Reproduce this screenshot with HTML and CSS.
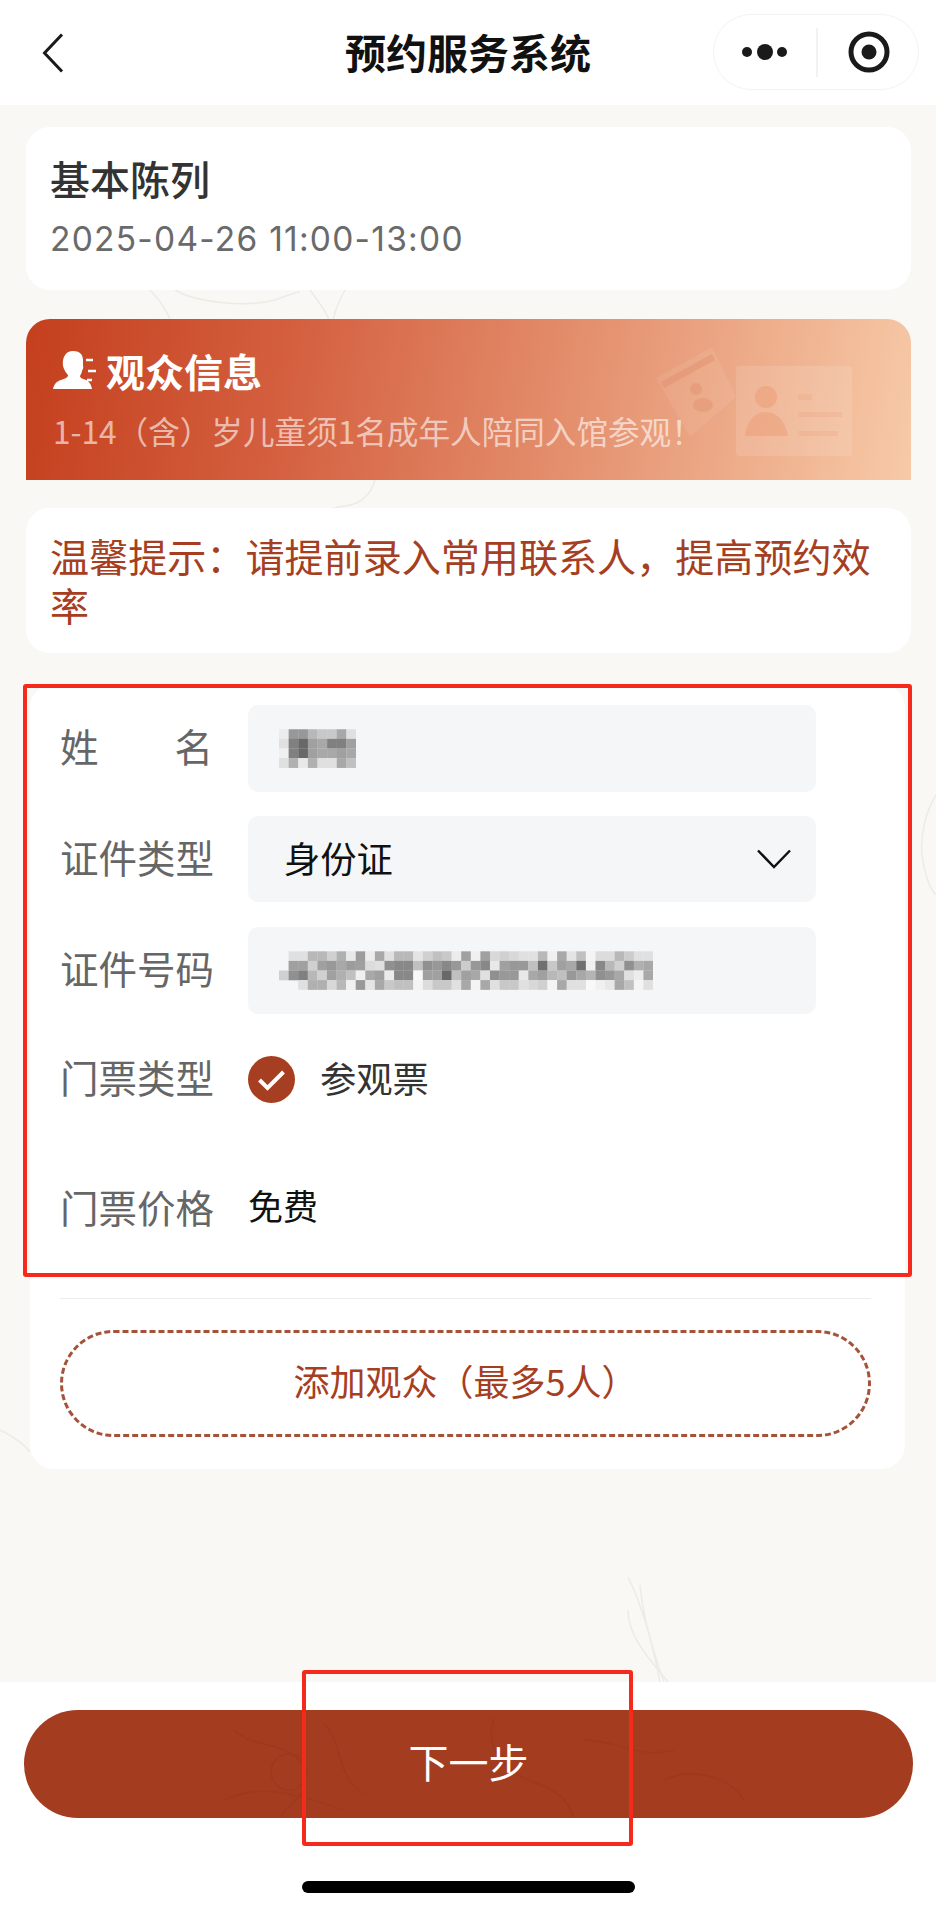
FILE: index.html
```html
<!DOCTYPE html>
<html lang="zh-CN">
<head>
<meta charset="utf-8">
<title>预约服务系统</title>
<link rel="stylesheet" href="styles.css">
</head>
<body>
<div class="page">
  <header class="nav">
    <div class="nav-left">
      <svg class="back" viewBox="0 0 22 40" width="22" height="40"><path d="M20 1.5 2.5 20 20 38.5" fill="none" stroke="#1a1a1a" stroke-width="3"/></svg>
    </div>
    <h1 class="nav-title">预约服务系统</h1>
    <div class="nav-right">
      <div class="capsule">
        <svg class="capsule-icon" viewBox="0 0 206 76" width="206" height="76">
          <circle cx="34" cy="38" r="5" fill="#1a1a1a"/><circle cx="52" cy="38" r="8" fill="#1a1a1a"/><circle cx="69" cy="38" r="5" fill="#1a1a1a"/>
          <line x1="104" y1="14" x2="104" y2="63" stroke="#e6e6e6" stroke-width="1"/>
          <circle cx="156" cy="38" r="18" fill="none" stroke="#1a1a1a" stroke-width="5"/><circle cx="156" cy="38" r="7.5" fill="#1a1a1a"/>
        </svg>
      </div>
    </div>
  </header>

  <main class="main">
    <svg class="ink" viewBox="0 0 936 1577" width="936" height="1577">
      <g fill="none" stroke="#ecebe6" stroke-width="1.5">
        <path d="M175 185c20 12 70 18 100 10 12-4 20-8 25-8"/>
        <path d="M150 185c14 14 20 26 24 40"/>
        <path d="M310 185c10 14 20 26 22 40M345 185c-8 14-12 26-14 40"/>
        <path d="M375 375c-4 14-14 24-30 26-14 2-28 4-40 26"/>
        <path d="M936 690c-10 16-16 40-14 60 2 18 8 34 14 40"/>
        <path d="M0 1325c12 6 24 14 30 22"/>
        <path d="M628 1472c12 24 24 64 32 105M628 1505c0 28 24 52 40 72M640 1480c2 24 8 52 24 97"/>
      </g>
    </svg>

    <section class="card session">
      <h2 class="session-title">基本陈列</h2>
      <p class="session-time">2025-04-26 11:00-13:00</p>
    </section>

    <section class="banner">
      <svg class="banner-art" viewBox="0 0 210 120" width="210" height="120">
        <path d="M10 42 66 11l24 50-46 40z" fill="#fff" opacity=".08"/>
        <path d="M15 46 66 18l3 6-51 28z" fill="#d9805c" opacity=".3"/>
        <circle cx="50" cy="53" r="6" fill="#e08a64" opacity=".35"/>
        <ellipse cx="57" cy="69" rx="10" ry="7" fill="#e08a64" opacity=".35"/>
        <rect x="90" y="30" width="116" height="90" rx="3" fill="#fff" opacity=".12"/>
        <circle cx="120" cy="61" r="11" fill="#ec9c74" opacity=".5"/>
        <path d="M99 100c2-16 11-24 21-24s19 8 22 24z" fill="#ec9c74" opacity=".5"/>
        <rect x="152" y="58" width="14" height="6" fill="#ec9c74" opacity=".2"/>
        <rect x="152" y="76" width="44" height="5" fill="#ec9c74" opacity=".2"/>
        <rect x="152" y="95" width="40" height="5" fill="#ec9c74" opacity=".2"/>
      </svg>
      <div class="banner-head">
        <svg class="banner-icon" viewBox="0 0 44 38" width="44" height="38">
          <path d="M20 0c6 0 10 3 10 9v5c0 1 .4 2 .2 3-.3 1.500-1 2-1.200 3-.3 2-1.500 4-2 5 0 2 3 3 6 4 3 1.500 5 4 6 9H0c1-5 4-8 8-9 4-1.500 7-2 7-5-2-2-4-5-5-9-1-9 3-15 10-15z" fill="#fff"/>
          <path d="M33 9h7M35 20h8M34 29h5" fill="none" stroke="#fff" stroke-width="2.500"/>
        </svg>
        <h2 class="banner-title">观众信息</h2>
      </div>
      <p class="banner-sub">1-14（含）岁儿童须1名成年人陪同入馆参观！</p>
    </section>

    <section class="card tip">温馨提示：请提前录入常用联系人，提高预约效率</section>

    <section class="card form">
      <div class="row">
        <span class="label label-spread"><span>姓</span><span>名</span></span>
        <div class="field">
          <svg class="mosaic mosaic-name" viewBox="0 0 8 4" width="77" height="39">
            <g><rect x="0" fill="#ececec"/><rect x="1" fill="#989898"/><rect x="2" fill="#989898"/><rect x="3" fill="#b8b8b8"/><rect x="4" fill="#c8c8c8"/><rect x="5" fill="#c8c8c8"/><rect x="6" fill="#a8a8a8"/><rect x="7" fill="#e0e0e0"/></g>
            <g transform="translate(0 1)"><rect x="0" fill="#e0e0e0"/><rect x="1" fill="#808080"/><rect x="2" fill="#686868"/><rect x="3" fill="#a0a0a0"/><rect x="4" fill="#a8a8a8"/><rect x="5" fill="#808080"/><rect x="6" fill="#808080"/><rect x="7" fill="#a0a0a0"/></g>
            <g transform="translate(0 2)"><rect x="0" fill="#f0f0f0"/><rect x="1" fill="#808080"/><rect x="2" fill="#686868"/><rect x="3" fill="#a0a0a0"/><rect x="4" fill="#a8a8a8"/><rect x="5" fill="#a8a8a8"/><rect x="6" fill="#a0a0a0"/><rect x="7" fill="#a8a8a8"/></g>
            <g transform="translate(0 3)"><rect x="0" fill="#e0e0e0"/><rect x="1" fill="#b0b0b0"/><rect x="2" fill="#e8e8e8"/><rect x="3" fill="#b0b0b0"/><rect x="4" fill="#e0e0e0"/><rect x="5" fill="#e0e0e0"/><rect x="6" fill="#a8a8a8"/><rect x="7" fill="#c0c0c0"/></g>
          </svg>
        </div>
      </div>
      <div class="row">
        <span class="label">证件类型</span>
        <div class="field field-select">
          <span class="field-value">身份证</span>
          <svg class="chevron" viewBox="0 0 34 20" width="34" height="20"><path d="M1 1.500 17 18 33 1.500" fill="none" stroke="#111" stroke-width="2.500"/></svg>
        </div>
      </div>
      <div class="row">
        <span class="label">证件号码</span>
        <div class="field">
          <svg class="mosaic mosaic-id" viewBox="0 0 39 4" width="374" height="39">
            <g><rect x="1" fill="#e0e0e0"/><rect x="2" fill="#e0e0e0"/><rect x="3" fill="#b8b8b8"/><rect x="4" fill="#b8b8b8"/><rect x="5" fill="#d0d0d0"/><rect x="6" fill="#b0b0b0"/><rect x="7" fill="#e8e8e8"/><rect x="8" fill="#9c9c9c"/><rect x="9" fill="#ececec"/><rect x="10" fill="#a8a8a8"/><rect x="11" fill="#e0e0e0"/><rect x="12" fill="#b8b8b8"/><rect x="13" fill="#b8b8b8"/><rect x="14" fill="#e4e4e4"/><rect x="15" fill="#d0d0d0"/><rect x="16" fill="#c0c0c0"/><rect x="17" fill="#c8c8c8"/><rect x="18" fill="#ececec"/><rect x="19" fill="#a0a0a0"/><rect x="20" fill="#f0f0f0"/><rect x="21" fill="#a0a0a0"/><rect x="22" fill="#d8d8d8"/><rect x="23" fill="#d0d0d0"/><rect x="24" fill="#d8d8d8"/><rect x="25" fill="#e0e0e0"/><rect x="26" fill="#e0e0e0"/><rect x="27" fill="#b8b8b8"/><rect x="28" fill="#f0f0f0"/><rect x="29" fill="#a8a8a8"/><rect x="30" fill="#e4e4e4"/><rect x="31" fill="#c0c0c0"/><rect x="32" fill="#f4f4f4"/><rect x="33" fill="#dcdcdc"/><rect x="34" fill="#dcdcdc"/><rect x="35" fill="#b8b8b8"/><rect x="36" fill="#cccccc"/><rect x="37" fill="#e0e0e0"/><rect x="38" fill="#e0e0e0"/></g>
            <g transform="translate(0 1)"><rect x="1" fill="#a0a0a0"/><rect x="2" fill="#a0a0a0"/><rect x="3" fill="#d0d0d0"/><rect x="4" fill="#a0a0a0"/><rect x="5" fill="#989898"/><rect x="6" fill="#a8a8a8"/><rect x="7" fill="#9c9c9c"/><rect x="8" fill="#a0a0a0"/><rect x="9" fill="#dcdcdc"/><rect x="10" fill="#e0e0e0"/><rect x="11" fill="#909090"/><rect x="12" fill="#888888"/><rect x="13" fill="#888888"/><rect x="14" fill="#c0c0c0"/><rect x="15" fill="#909090"/><rect x="16" fill="#989898"/><rect x="17" fill="#888888"/><rect x="18" fill="#989898"/><rect x="19" fill="#cccccc"/><rect x="20" fill="#989898"/><rect x="21" fill="#888888"/><rect x="22" fill="#e8e8e8"/><rect x="23" fill="#a0a0a0"/><rect x="24" fill="#989898"/><rect x="25" fill="#989898"/><rect x="26" fill="#c0c0c0"/><rect x="27" fill="#707070"/><rect x="28" fill="#c8c8c8"/><rect x="29" fill="#a0a0a0"/><rect x="30" fill="#a8a8a8"/><rect x="31" fill="#707070"/><rect x="32" fill="#f0f0f0"/><rect x="33" fill="#888888"/><rect x="34" fill="#b8b8b8"/><rect x="35" fill="#d0d0d0"/><rect x="36" fill="#909090"/><rect x="37" fill="#b0b0b0"/><rect x="38" fill="#a8a8a8"/></g>
            <g transform="translate(0 2)"><rect x="0" fill="#d0d0d0"/><rect x="1" fill="#909090"/><rect x="2" fill="#808080"/><rect x="3" fill="#b8b8b8"/><rect x="4" fill="#d0d0d0"/><rect x="5" fill="#a0a0a0"/><rect x="6" fill="#b0b0b0"/><rect x="7" fill="#c0c0c0"/><rect x="8" fill="#f0f0f0"/><rect x="9" fill="#a8a8a8"/><rect x="10" fill="#a0a0a0"/><rect x="11" fill="#ececec"/><rect x="12" fill="#888888"/><rect x="13" fill="#888888"/><rect x="14" fill="#f8f8f8"/><rect x="15" fill="#a0a0a0"/><rect x="16" fill="#a0a0a0"/><rect x="17" fill="#686868"/><rect x="18" fill="#c0c0c0"/><rect x="19" fill="#a0a0a0"/><rect x="20" fill="#a8a8a8"/><rect x="21" fill="#e0e0e0"/><rect x="22" fill="#909090"/><rect x="23" fill="#989898"/><rect x="24" fill="#989898"/><rect x="25" fill="#e8e8e8"/><rect x="26" fill="#a8a8a8"/><rect x="27" fill="#a0a0a0"/><rect x="28" fill="#b8b8b8"/><rect x="29" fill="#c0c0c0"/><rect x="30" fill="#989898"/><rect x="31" fill="#a8a8a8"/><rect x="32" fill="#b4b4b4"/><rect x="33" fill="#909090"/><rect x="34" fill="#989898"/><rect x="35" fill="#a8a8a8"/><rect x="36" fill="#e0e0e0"/><rect x="37" fill="#ececec"/><rect x="38" fill="#a8a8a8"/></g>
            <g transform="translate(0 3)"><rect x="2" fill="#e0e0e0"/><rect x="3" fill="#b0b0b0"/><rect x="4" fill="#b0b0b0"/><rect x="5" fill="#d8d8d8"/><rect x="6" fill="#b8b8b8"/><rect x="7" fill="#f0f0f0"/><rect x="8" fill="#989898"/><rect x="9" fill="#e4e4e4"/><rect x="10" fill="#a8a8a8"/><rect x="11" fill="#c8c8c8"/><rect x="12" fill="#c0c0c0"/><rect x="13" fill="#c0c0c0"/><rect x="14" fill="#f4f4f4"/><rect x="15" fill="#dcdcdc"/><rect x="16" fill="#c8c8c8"/><rect x="17" fill="#c8c8c8"/><rect x="18" fill="#e0e0e0"/><rect x="19" fill="#a8a8a8"/><rect x="20" fill="#f4f4f4"/><rect x="21" fill="#a8a8a8"/><rect x="22" fill="#e0e0e0"/><rect x="23" fill="#c8c8c8"/><rect x="24" fill="#c8c8c8"/><rect x="25" fill="#e0e0e0"/><rect x="26" fill="#d8d8d8"/><rect x="27" fill="#d0d0d0"/><rect x="28" fill="#f4f4f4"/><rect x="29" fill="#a8a8a8"/><rect x="30" fill="#e0e0e0"/><rect x="31" fill="#e0e0e0"/><rect x="32" fill="#f8f8f8"/><rect x="33" fill="#f0f0f0"/><rect x="34" fill="#e8e8e8"/><rect x="35" fill="#a8a8a8"/><rect x="36" fill="#c0c0c0"/><rect x="37" fill="#f4f4f4"/><rect x="38" fill="#e0e0e0"/></g>
          </svg>
        </div>
      </div>
      <div class="row row-ticket">
        <span class="label">门票类型</span>
        <svg class="check" viewBox="0 0 47 47" width="47" height="47"><circle cx="23.500" cy="23.500" r="23.500" fill="#a63e22"/><path d="M11.500 24l8 8 16-16" fill="none" stroke="#fff" stroke-width="4"/></svg>
        <span class="ticket-name">参观票</span>
      </div>
      <div class="row row-price">
        <span class="label">门票价格</span>
        <span class="price">免费</span>
      </div>
      <div class="divider"></div>
      <button class="add" type="button">添加观众（最多5人）</button>
    </section>
  </main>

  <footer class="footer">
    <button class="next" type="button">
      <svg class="next-art" viewBox="0 0 888 108" width="888" height="108">
        <g fill="none" stroke="#8f3119" stroke-width="1.500" opacity=".25">
          <path d="M210 20c20 20 60 10 70 40s-30 40-20 48M300 14c20 20 10 50 40 70M200 90c40-20 90 0 120 10"/>
          <path d="M470 8c-10 30 10 50 30 60s40 10 50 40M560 30c30 0 60 20 90 10M640 70c20-10 60-10 80 20"/>
          <circle cx="265" cy="62" r="18"/>
        </g>
      </svg>
      <span class="next-text">下一步</span>
    </button>
    <div class="home-bar"></div>
  </footer>

  <div class="mark mark-form"></div>
  <div class="mark mark-next"></div>
</div>
</body>
</html>
```

FILE: styles.css
```css
* { box-sizing: border-box; }
html, body { margin: 0; padding: 0; }
body { font-family: "Noto Sans CJK SC", "Noto Sans", sans-serif; background: #f9f8f4; }
h1, h2, p { margin: 0; font-weight: inherit; }

.page { position: relative; width: 936px; height: 1912px; display: flex; flex-direction: column; overflow: hidden; background: #f9f8f4; }

/* Navigation bar */
.nav { flex: none; height: 105px; display: grid; grid-template-columns: 1fr auto 1fr; align-items: center; background: #fff; }
.nav-left { padding-left: 42px; display: flex; align-items: center; }
.back { display: block; }
.nav-title { font-size: 41px; line-height: 50px; font-weight: 700; color: #111; margin-top: -4px; }
.nav-right { display: flex; justify-content: flex-end; padding-right: 17px; }
.capsule { width: 206px; height: 76px; border: 1px solid #f3f3f3; border-radius: 38px; margin-top: -1px; }
.capsule-icon { display: block; margin: -1px; }

/* Main column */
.main { position: relative; flex: 1; padding: 22px 25px 0 26px; display: flex; flex-direction: column; }
.ink { position: absolute; left: 0; top: 0; filter: blur(.6px); }
.card { position: relative; background: #fff; border-radius: 24px; }

.session { height: 163px; padding: 26px 24px 0; }
.session-title { font-size: 40px; line-height: 50px; font-weight: 500; color: #333; }
.session-time { margin-top: 16px; font-family: Inter, "Noto Sans", sans-serif; font-size: 33.500px; line-height: 40px; color: #6a6a6a; letter-spacing: 1.250px; }

.banner { position: relative; margin-top: 29px; height: 161px; padding: 26px 27px 0; border-radius: 24px 24px 0 0; overflow: hidden; background: linear-gradient(100deg, #c43f1d 0%, #d46040 30%, #e4906e 62%, #f7caa8 100%); }
.banner-art { position: absolute; left: 620px; top: 17px; }
.banner-head { position: relative; display: flex; align-items: center; gap: 9px; height: 50px; }
.banner-icon { display: block; flex: none; }
.banner-title { font-size: 39px; line-height: 50px; font-weight: 700; color: #fff; }
.banner-sub { position: relative; margin-top: 15px; font-size: 31.600px; line-height: 40px; color: rgba(255, 255, 255, .62); white-space: nowrap; }

.tip { margin-top: 28px; height: 145px; padding: 23px 24px 0; font-size: 39.100px; line-height: 49px; color: #a63e22; }

/* Form */
.form { margin: 31px 6px 0 4px; height: 785px; padding: 21px 34px 0 30px; }
.row { display: flex; align-items: center; margin-bottom: 24px; }
.label { flex: none; width: 153px; margin-right: 35px; padding-bottom: 7px; font-size: 38.500px; line-height: 50px; color: #666; white-space: nowrap; }
.label-spread { display: flex; justify-content: space-between; }
.field { width: 568px; height: 87px; padding: 0 25px 0 31px; display: flex; align-items: center; background: #f4f6f8; border-radius: 10px; }
.field-select { justify-content: space-between; height: 86px; margin-bottom: 1px; padding-left: 36px; }
.field-value { padding-bottom: 5px; font-size: 36.300px; line-height: 50px; color: #111; }
.chevron { display: block; }
.mosaic { display: block; filter: blur(.7px); }
.mosaic rect { width: 1.020px; height: 1.020px; }

.row-ticket { height: 47px; margin: 42px 0 0; }
.check { display: block; flex: none; margin-right: 25px; }
.ticket-name { padding-bottom: 6px; font-size: 36.300px; line-height: 50px; color: #333; }
.row-price { height: 50px; margin: 81px 0 0; }
.price { padding-bottom: 8px; font-size: 35px; line-height: 50px; color: #111; }

.divider { margin-top: 64px; width: 811px; height: 1px; background: #ececec; }
.add { display: block; margin-top: 31px; width: 811px; height: 107px; padding: 0 0 7px; background: transparent; border: 3px dashed #a5523a; border-radius: 54px; font-family: inherit; font-size: 36px; line-height: 50px; color: #a63e22; }

/* Footer */
.footer { position: relative; flex: none; height: 230px; padding: 28px 23px 0 24px; background: #fff; }
.next { position: relative; display: block; width: 889px; height: 108px; padding: 0 0 6px; border: 0; border-radius: 54px; overflow: hidden; background: #a43c20; font-family: inherit; }
.next-art { position: absolute; left: 0; top: 0; }
.next-text { position: relative; font-size: 40px; line-height: 50px; color: #fff; }
.home-bar { width: 333px; height: 12px; margin: 63px auto 0; border-radius: 6px; background: #000; }

/* Annotation frames drawn over the screenshot */
.mark { position: absolute; border: 4px solid #f52a1c; border-radius: 3px; pointer-events: none; }
.mark-form { left: 23px; top: 684px; width: 889px; height: 593px; }
.mark-next { left: 302px; top: 1670px; width: 331px; height: 176px; }
```
